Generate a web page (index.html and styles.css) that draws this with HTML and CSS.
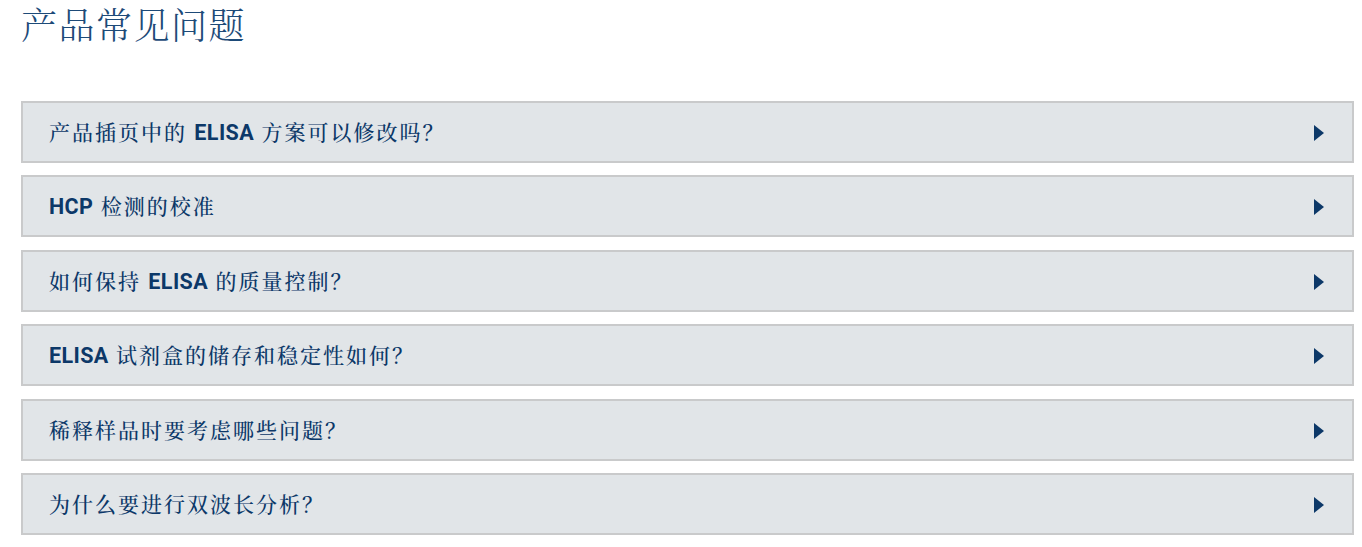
FILE: index.html
```html
<!DOCTYPE html>
<html lang="zh-CN">
<head>
<meta charset="utf-8">
<title>产品常见问题</title>
<link rel="stylesheet" href="styles.css">
</head>
<body>
<div class="page">
  <h1 class="title">产品常见问题</h1>
  <ul class="faq">
    <li class="faq-item"><span class="q">产品插页中的 <b>ELISA</b> 方案可以修改吗？</span><span class="arrow"></span></li>
    <li class="faq-item"><span class="q"><b>HCP</b> 检测的校准</span><span class="arrow"></span></li>
    <li class="faq-item"><span class="q">如何保持 <b>ELISA</b> 的质量控制？</span><span class="arrow"></span></li>
    <li class="faq-item"><span class="q"><b>ELISA</b> 试剂盒的储存和稳定性如何？</span><span class="arrow"></span></li>
    <li class="faq-item"><span class="q">稀释样品时要考虑哪些问题？</span><span class="arrow"></span></li>
    <li class="faq-item"><span class="q">为什么要进行双波长分析？</span><span class="arrow"></span></li>
  </ul>
</div>
</body>
</html>
```

FILE: styles.css
```css
html, body {
  margin: 0;
  padding: 0;
  background: #ffffff;
}
.page {
  padding: 2px 8px 0 21px;
  font-family: "Noto Serif CJK SC", "Noto Sans CJK SC", serif;
}
.title {
  margin: 0;
  font-size: 36px;
  line-height: 44px;
  font-weight: 300;
  color: #1d4a78;
  letter-spacing: 1.5px;
}
.faq {
  list-style: none;
  margin: 55px 0 0 0;
  padding: 0;
  display: flex;
  flex-direction: column;
  gap: 12.4px;
}
.faq-item {
  box-sizing: border-box;
  height: 62px;
  background: #e1e5e8;
  border: 2px solid #c9cacb;
  display: flex;
  align-items: center;
  justify-content: space-between;
  padding: 0 28px 2px 26px;
}
.q {
  font-size: 21px;
  color: #0c3868;
  letter-spacing: 2px;
  font-weight: 500;
}
.q b {
  font-family: Roboto, "Liberation Sans", sans-serif;
  font-size: 21.5px;
  font-weight: 700;
  letter-spacing: 0.4px;
}
.arrow {
  width: 0;
  height: 0;
  border-top: 8.5px solid transparent;
  border-bottom: 8.5px solid transparent;
  border-left: 10px solid #0c3868;
  margin-top: 4px;
}
```
